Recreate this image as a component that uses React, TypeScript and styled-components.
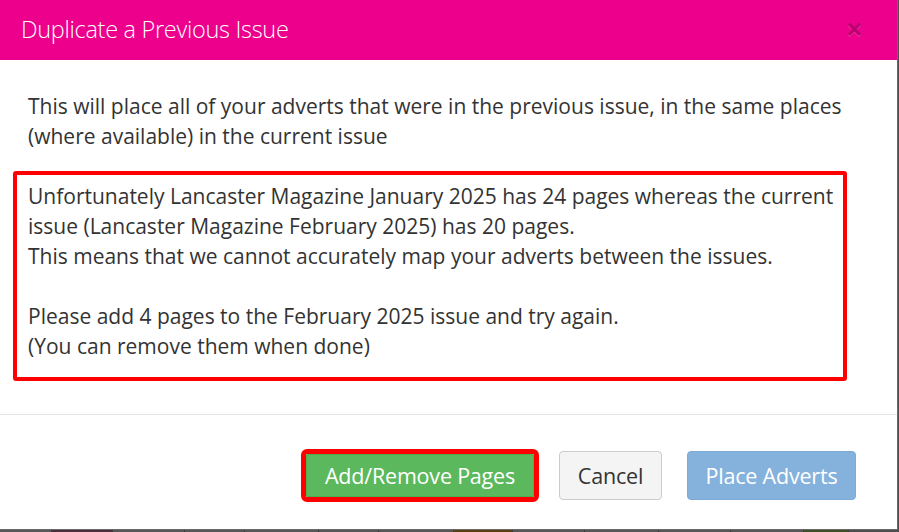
import React from "react";
import styled, { createGlobalStyle } from "styled-components";

const GlobalStyle = createGlobalStyle`
  html, body { margin: 0; padding: 0; }
  body {
    background: #4e4e4e;
    font-family: "Open Sans", "Noto Sans", "Liberation Sans", sans-serif;
    overflow: hidden;
  }
  * { box-sizing: border-box; }
`;

const Page = styled.div`
  position: relative;
  width: 899px;
  height: 532px;
  display: flex;
  flex-direction: column;
  justify-content: flex-end;
`;

const BackdropRow = styled.div`
  display: flex;
  height: 3px;
`;

const BackdropCell = styled.div<{ $bg: string; $w: number }>`
  width: ${(p) => p.$w}px;
  flex: none;
  background: ${(p) => p.$bg};
  border-right: 1px solid #3a3a3a;
`;

const Modal = styled.div`
  position: absolute;
  top: 0;
  left: 0;
  width: 898px;
  height: 530px;
  background: #fff;
  border-right: 1px solid #6a6a6a;
  border-bottom: 1px solid #6a6a6a;
  display: flex;
  flex-direction: column;
`;

const Header = styled.div`
  height: 60px;
  flex: none;
  background: #ec008c;
  display: flex;
  align-items: center;
  justify-content: space-between;
  padding: 0 34px 0 21px;
`;

const Title = styled.h4`
  margin: 0;
  color: #fff;
  font-size: 23.5px;
  font-weight: 300;
  letter-spacing: -0.3px;
  line-height: 1;
`;

const Close = styled.button`
  border: 0;
  background: transparent;
  padding: 0;
  font-family: "Open Sans", sans-serif;
  font-size: 30px;
  font-weight: 700;
  line-height: 1;
  color: #000;
  opacity: 0.2;
  text-shadow: 0 1px 0 #fff;
  cursor: pointer;
  margin-top: -2px;
`;

const Body = styled.div`
  padding: 31px 50px 33px 28px;
  color: #333;
  font-size: 21px;
  line-height: 30px;
  flex: none;
`;

const Para = styled.p`
  margin: 0 0 20px 0;
`;

const Warning = styled.div`
  margin-left: -15px;
  border: 4px solid #ff0000;
  border-radius: 3px;
  padding: 6px 4px 16px 11px;
`;

const Footer = styled.div`
  border-top: 1px solid #e5e5e5;
  flex: 1;
  display: flex;
  justify-content: flex-end;
  align-items: center;
  gap: 25px;
  padding: 6px 41px 0 0;
`;

const Btn = styled.button<{ $variant: "success" | "default" | "primary"; $w: number; $h: number }>`
  width: ${(p) => p.$w}px;
  height: ${(p) => p.$h}px;
  font-family: "Open Sans", "Noto Sans", sans-serif;
  font-size: 21.5px;
  letter-spacing: -0.2px;
  border-radius: 4px;
  padding: 0;
  display: flex;
  align-items: center;
  justify-content: center;
  cursor: pointer;
  ${(p) =>
    p.$variant === "success"
      ? `background:#5cb85c;border:1px solid #4cae4c;color:#fff;outline:5px solid #ff0000;border-radius:1px;`
      : p.$variant === "default"
      ? `background:#f4f4f4;border:1px solid #cccccc;color:#333;`
      : `background:#85b2dc;border:1px solid #7eaad6;color:#fff;`}
`;

const cells: [string, number][] = [
  ["#575757", 52],
  ["#4a2e3c", 61],
  ["#575757", 72],
  ["#575757", 60],
  ["#575757", 74],
  ["#575757", 60],
  ["#575757", 75],
  ["#5a4010", 59],
  ["#575757", 72],
  ["#575757", 74],
  ["#575757", 72],
  ["#575757", 73],
  ["#3e4f2a", 45],
];

export default function App() {
  return (
    <>
      <GlobalStyle />
      <Page>
        <BackdropRow>
          {cells.map(([bg, w], i) => (
            <BackdropCell key={i} $bg={bg} $w={w} />
          ))}
        </BackdropRow>
        <Modal>
          <Header>
            <Title>Duplicate a Previous Issue</Title>
            <Close aria-label="Close">×</Close>
          </Header>
          <Body>
            <Para>
              This will place all of your adverts that were in the previous issue, in the same places
              (where available) in the current issue
            </Para>
            <Warning>
              Unfortunately Lancaster Magazine January 2025 has 24 pages whereas the current issue
              (Lancaster Magazine February 2025) has 20 pages.
              <br />
              This means that we cannot accurately map your adverts between the issues.
              <br />
              <br />
              Please add 4 pages to the February 2025 issue and try again.
              <br />
              (You can remove them when done)
            </Warning>
          </Body>
          <Footer>
            <Btn $variant="success" $w={228} $h={43}>Add/Remove Pages</Btn>
            <Btn $variant="default" $w={103} $h={49}>Cancel</Btn>
            <Btn $variant="primary" $w={169} $h={49}>Place Adverts</Btn>
          </Footer>
        </Modal>
      </Page>
    </>
  );
}
